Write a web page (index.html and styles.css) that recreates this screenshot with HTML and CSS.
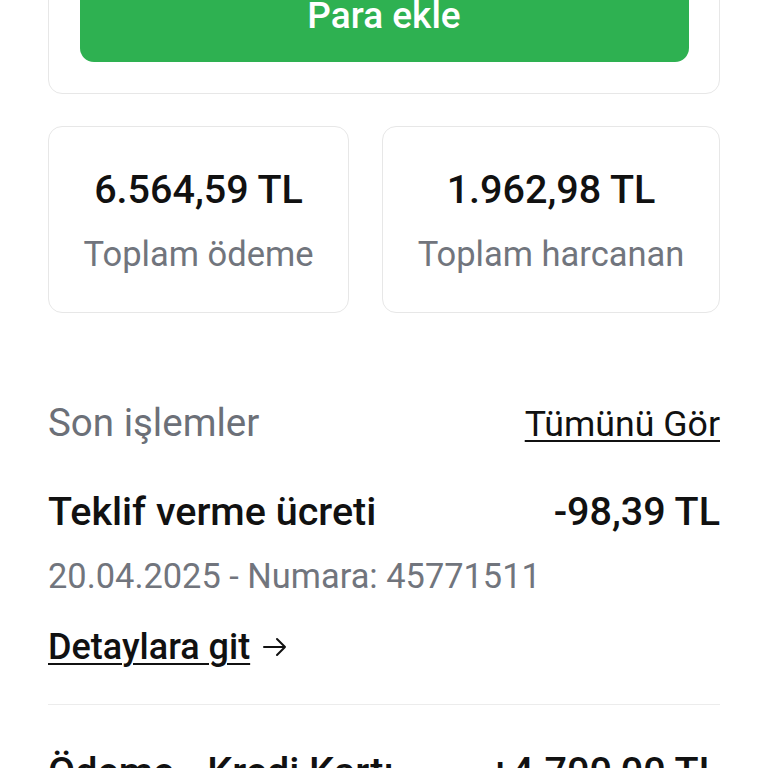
FILE: index.html
```html
<!DOCTYPE html>
<html lang="tr">
<head>
    <meta charset="UTF-8">
    <meta name="viewport" content="width=device-width, initial-scale=1.0">
    <title>Cüzdan</title>
    <link rel="stylesheet" href="styles.css">
</head>
<body>
    <div class="page">
        <!-- Bakiye kartı -->
        <div class="wallet-card">
            <button class="add-btn">Para ekle</button>
        </div>

        <!-- Toplamlar -->
        <div class="stats">
            <div class="stat-card">
                <div class="stat-value">6.564,59 TL</div>
                <div class="stat-label">Toplam ödeme</div>
            </div>
            <div class="stat-card">
                <div class="stat-value">1.962,98 TL</div>
                <div class="stat-label">Toplam harcanan</div>
            </div>
        </div>

        <!-- Son işlemler -->
        <div class="section-header">
            <div class="section-title">Son işlemler</div>
            <a href="#" class="see-all">Tümünü Gör</a>
        </div>

        <div class="tx-list">
            <div class="tx">
                <div class="tx-top">
                    <div class="tx-title">Teklif verme ücreti</div>
                    <div class="tx-amount">-98,39 TL</div>
                </div>
                <div class="tx-meta">20.04.2025 - Numara: 45771511</div>
                <a href="#" class="tx-link">
                    <span class="tx-link-text">Detaylara git</span>
                    <svg class="tx-arrow" width="24" height="20" viewBox="0 0 24 20">
                        <path d="M1 10H22M14 2L22 10L14 18" fill="none" stroke="#111" stroke-width="2" stroke-linecap="round" stroke-linejoin="round"/>
                    </svg>
                </a>
            </div>
            <div class="tx">
                <div class="tx-top">
                    <div class="tx-title">Ödeme - Kredi Kartı</div>
                    <div class="tx-amount">+4.700,00 TL</div>
                </div>
                <div class="tx-meta">18.04.2025 - Numara: 45712093</div>
                <a href="#" class="tx-link">
                    <span class="tx-link-text">Detaylara git</span>
                </a>
            </div>
        </div>
    </div>
</body>
</html>
```

FILE: styles.css
```css
* {
    margin: 0;
    padding: 0;
    box-sizing: border-box;
    font-family: Roboto, 'Noto Sans', sans-serif;
}

body {
    background-color: white;
    color: #111;
    overflow: hidden;
}

.page {
    padding: 0 48px;
    margin-top: -63px;
}

/* Bakiye kartı */
.wallet-card {
    border: 1.5px solid #e7e7e7;
    border-radius: 14px;
    padding: 31px 30.5px 31px;
}

.add-btn {
    display: block;
    width: 100%;
    height: 93px;
    border: none;
    border-radius: 14px;
    background-color: #2eb151;
    color: white;
    font-size: 37px;
    font-weight: 500;
    line-height: 93px;
}

/* Toplamlar */
.stats {
    display: flex;
    gap: 33px;
    margin-top: 32px;
}

.stat-card {
    flex: 1 1 auto;
    border: 1.5px solid #e7e7e7;
    border-radius: 14px;
    padding: 40px 22px 37px;
    text-align: center;
}

.stat-value {
    font-size: 39.5px;
    font-weight: 500;
    line-height: 46px;
}

.stat-label {
    margin-top: 20px;
    font-size: 34.5px;
    line-height: 42px;
    color: #71757d;
}

/* Son işlemler */
.section-header {
    display: flex;
    justify-content: space-between;
    align-items: baseline;
    margin-top: 88px;
}

.section-title {
    font-size: 38.5px;
    line-height: 44px;
    color: #6c7078;
}

.see-all {
    font-size: 35.7px;
    line-height: 42px;
    color: #111;
    text-decoration: underline;
    text-decoration-thickness: 2px;
    text-underline-offset: 4px;
}

.tx {
    padding: 44px 0 36px;
    border-bottom: 1.5px solid #ececec;
}

.tx-top {
    display: flex;
    justify-content: space-between;
    align-items: baseline;
}

.tx-title,
.tx-amount {
    font-size: 39.5px;
    font-weight: 500;
    line-height: 46px;
}

.tx-meta {
    margin-top: 20px;
    font-size: 34.4px;
    line-height: 42px;
    color: #71757d;
}

.tx-link {
    display: inline-flex;
    align-items: center;
    gap: 13px;
    margin-top: 29px;
    color: #111;
    text-decoration: none;
}

.tx-link-text {
    font-size: 36px;
    font-weight: 500;
    line-height: 42px;
    text-decoration: underline;
    text-decoration-thickness: 2px;
    text-underline-offset: 4px;
}
```
